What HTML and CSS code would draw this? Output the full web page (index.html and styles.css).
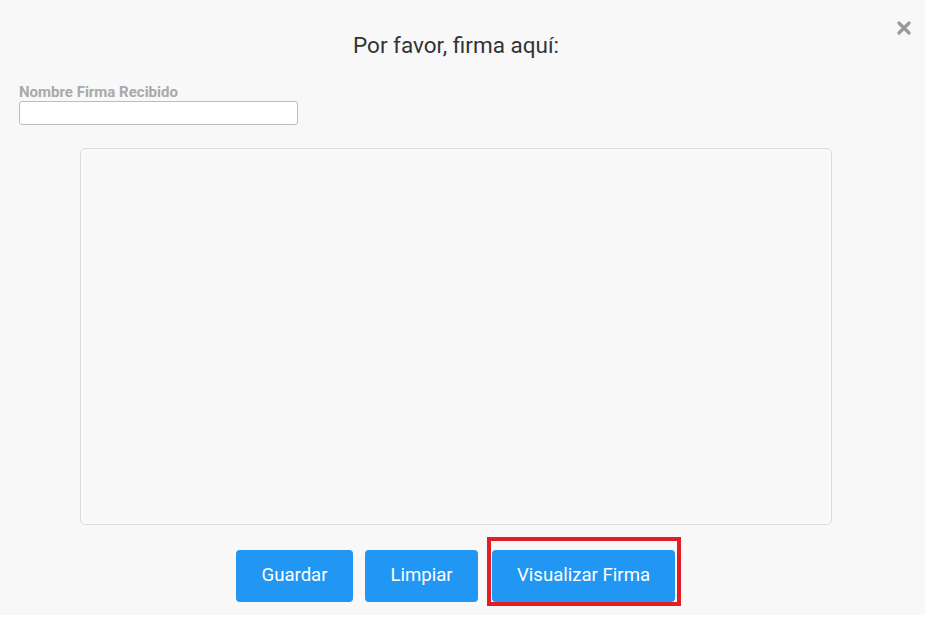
FILE: index.html
```html
<!DOCTYPE html>
<html lang="es">
<head>
<meta charset="utf-8">
<title>Firma</title>
<link rel="stylesheet" href="styles.css">
</head>
<body>
<div class="modal">
  <button class="close" aria-label="Cerrar">
    <svg width="14" height="14" viewBox="0 0 14 14"><path d="M2 2 L12 12 M12 2 L2 12" stroke="#9a9a9a" stroke-width="3.2" stroke-linecap="round"/></svg>
  </button>
  <h1 class="title">Por favor, firma aquí:</h1>
  <div class="field">
    <label class="label" for="nombre">Nombre Firma Recibido</label>
    <input class="input" id="nombre" type="text">
  </div>
  <div class="canvas"></div>
  <div class="actions">
    <button class="btn btn-save">Guardar</button>
    <button class="btn btn-clear">Limpiar</button>
    <span class="highlight"><button class="btn btn-wide">Visualizar Firma</button></span>
  </div>
</div>
</body>
</html>
```
FILE: styles.css
```css
html, body {
  margin: 0;
  padding: 0;
  background: #ffffff;
  font-family: Roboto, "Liberation Sans", Arial, sans-serif;
}
.modal {
  position: relative;
  width: 925px;
  height: 615px;
  box-sizing: border-box;
  background: #f8f8f8;
  padding-top: 32px;
  display: flex;
  flex-direction: column;
}
.close {
  position: absolute;
  top: 21px;
  left: 897px;
  width: 14px;
  height: 14px;
  padding: 0;
  border: 0;
  background: none;
  display: flex;
}
.title {
  margin: 0;
  width: 912px;
  text-align: center;
  font-size: 22.5px;
  line-height: 26px;
  font-weight: 400;
  color: #333333;
}
.field {
  margin-top: 26px;
  margin-left: 19px;
  display: flex;
  flex-direction: column;
  align-items: flex-start;
}
.label {
  font-size: 15px;
  line-height: 17px;
  font-weight: 700;
  color: #a9a9a9;
  margin-bottom: 0;
}
.input {
  width: 279px;
  height: 24px;
  box-sizing: border-box;
  border: 1px solid #bdbdbd;
  border-radius: 3px;
  background: #ffffff;
  margin: 0;
  padding: 0 4px;
}
.canvas {
  margin-top: 23px;
  margin-left: 80px;
  width: 752px;
  height: 377px;
  box-sizing: border-box;
  border: 1px solid #dcdcdc;
  border-radius: 5px;
  background: #f9f9f9;
}
.actions {
  margin-top: 12px;
  margin-left: 236px;
  display: flex;
  align-items: flex-end;
  gap: 12px;
}
.btn {
  flex: none;
  height: 52px;
  padding: 0 0 2px;
  border: 0;
  border-radius: 4px;
  background: #2196f3;
  color: #ffffff;
  font-family: Roboto, "Liberation Sans", Arial, sans-serif;
  font-size: 18.6px;
  font-weight: 400;
  white-space: nowrap;
}
.btn-save { width: 117px; }
.btn-clear { width: 113px; }
.btn-wide { width: 183px; }
.highlight {
  display: flex;
  border: 4px solid #e21d25;
  padding: 9px 2px 0 1px;
  margin-bottom: -4px;
  margin-left: -3px;
}
```
